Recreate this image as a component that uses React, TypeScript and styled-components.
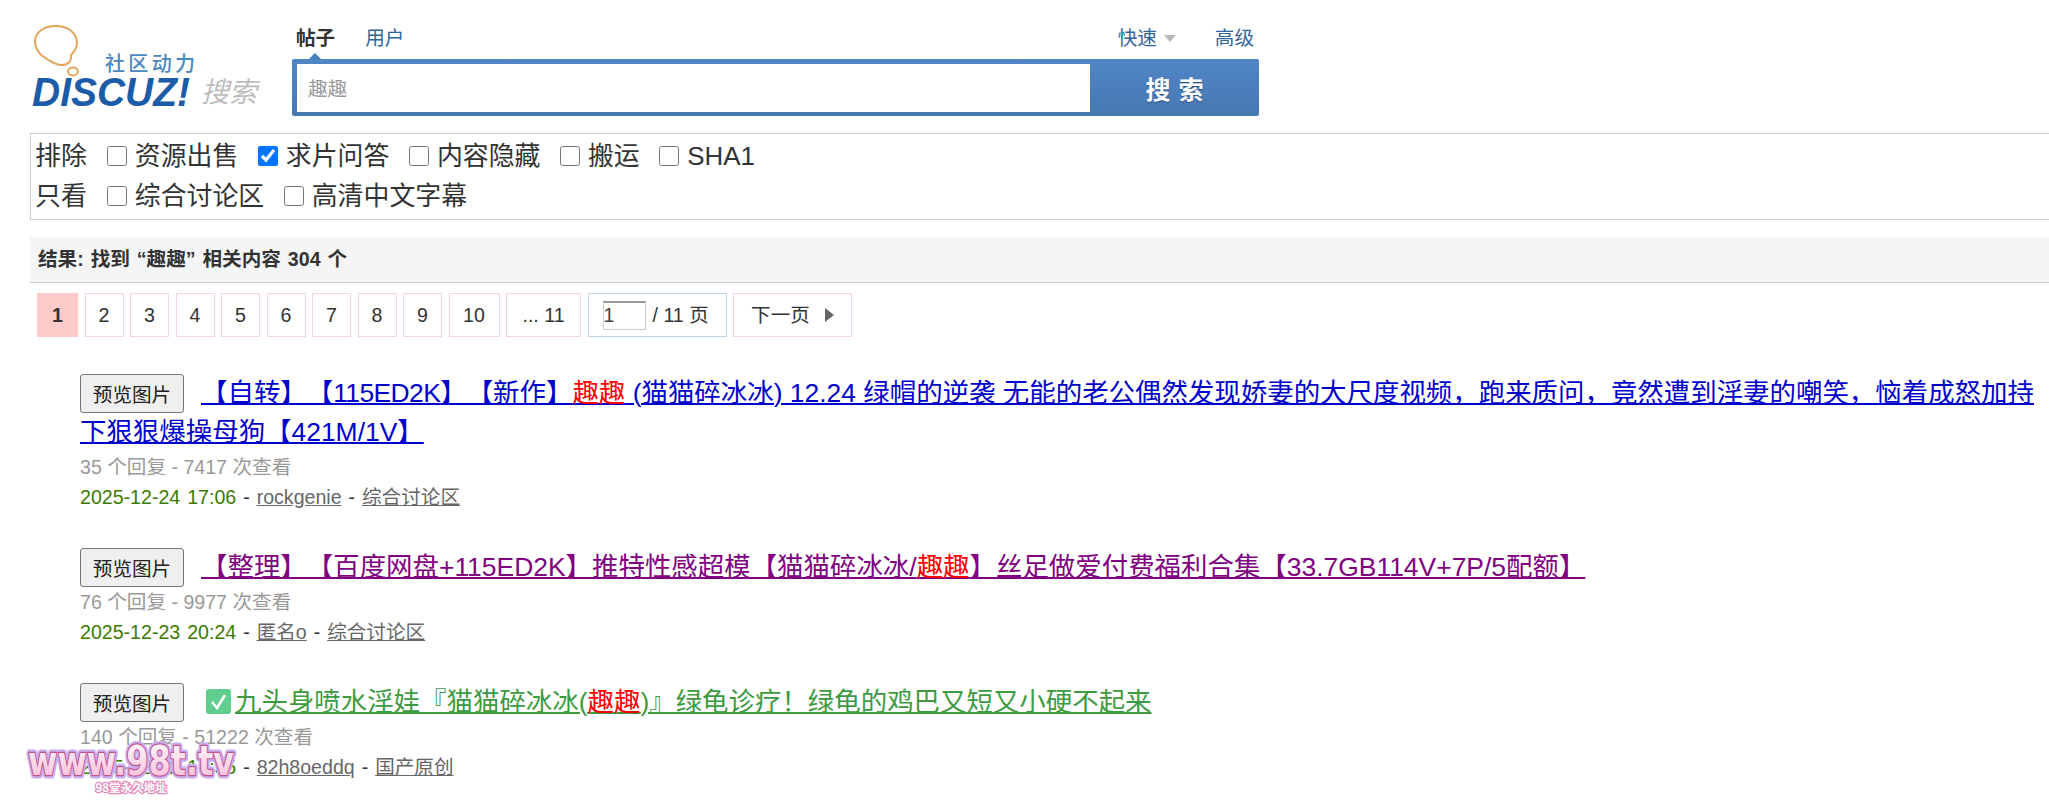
import React from 'react';
import styled, { createGlobalStyle } from 'styled-components';

const FONT = `"Liberation Sans", "Noto Sans CJK SC", sans-serif`;

const GlobalStyle = createGlobalStyle`
  html, body {
    margin: 0;
    padding: 0;
    background: #fff;
    overflow: hidden;
    height: 801px;
  }
  body {
    font: 19.6px/30px ${FONT};
    color: #444;
    text-spacing-trim: space-all;
  }
`;

const Page = styled.div`
  position: relative;
  width: 2049px;
  height: 801px;
  overflow: hidden;
`;

const Header = styled.header`
  display: flex;
  height: 133px;
`;

const LogoArt = styled.svg`
  flex: none;
  width: 292px;
  height: 133px;
`;

const SearchArea = styled.div`
  width: 967px;
  padding-top: 20px;
`;

const TabRow = styled.nav`
  position: relative;
  display: flex;
  align-items: center;
  height: 39px;
  box-sizing: border-box;
  padding: 0 0 3px 4px;
`;

const Tab = styled.a<{ $active?: boolean; $flush?: boolean }>`
  margin-right: ${(p) => (p.$flush ? 0 : 30)}px;
  color: ${(p) => (p.$active ? '#333' : '#369')};
  font-weight: ${(p) => (p.$active ? 700 : 400)};
`;

const TabCaret = styled.span`
  position: absolute;
  left: 17px;
  bottom: 0;
  border: 6px solid transparent;
  border-top: 0;
  border-bottom-color: #4a80bd;
`;

const TabRight = styled.div`
  display: flex;
  align-items: center;
  margin-left: auto;
  margin-right: 5px;
`;

const QuickCaret = styled.span`
  width: 0;
  height: 0;
  margin: 0 39px 0 7px;
  border: 6px solid transparent;
  border-top: 7px solid #bbb;
  border-bottom: 0;
`;

const SearchBox = styled.form`
  display: flex;
  height: 57px;
  box-sizing: border-box;
  border-radius: 2px;
  background: linear-gradient(#4f86c6, #4877b2);
  padding: 5px 0 4px 5px;
`;

const SearchInput = styled.input`
  flex: 1;
  min-width: 0;
  box-sizing: border-box;
  border: 0;
  outline: 0;
  padding: 0 10px 2px 11px;
  background: #fff;
  color: #999;
  font: 19.6px ${FONT};
`;

const SearchButton = styled.button`
  flex: none;
  width: 169px;
  border: 0;
  background: none;
  color: #fff;
  font: 700 25px ${FONT};
  letter-spacing: 8px;
  text-indent: 8px;
  text-shadow: 0 1px 1px #24507f;
  padding: 0;
`;

const FilterBox = styled.div`
  margin: 0 -4px 0 30px;
  height: 87px;
  box-sizing: border-box;
  border: 1px solid #ccc;
  padding: 2px 4px;
  font-size: 25.9px;
  line-height: 40px;
  color: #333;
`;

const FilterRow = styled.div`
  display: flex;
  align-items: center;
  height: 40px;
`;

const FilterTitle = styled.span`
  margin-right: 20px;
`;

const FilterItem = styled.label`
  display: flex;
  align-items: center;
  margin-right: 19.5px;
`;

const FilterCheck = styled.input`
  width: 20px;
  height: 20px;
  margin: 0 8px 0 0;
`;

const ResultBar = styled.div`
  margin: 17px -4px 0 30px;
  height: 46px;
  box-sizing: border-box;
  border-bottom: 1px solid #ccc;
  background: #f5f5f5;
  padding-left: 8px;
  line-height: 45px;
  font-weight: 700;
  color: #333;
  word-spacing: 1.5px;
`;

const Pager = styled.div`
  display: flex;
  gap: 6.5px;
  margin: 10px 0 37px 37px;
  height: 44px;
`;

const PageCell = styled.a<{ $current?: boolean; $width: number }>`
  display: flex;
  align-items: center;
  justify-content: center;
  width: ${(p) => p.$width}px;
  box-sizing: border-box;
  border: 1px solid ${(p) => (p.$current ? '#ffcaca' : '#f5d5d5')};
  background: ${(p) => (p.$current ? '#ffcaca' : '#fff')};
  font-weight: ${(p) => (p.$current ? 700 : 400)};
  color: #333;
`;

const JumpCell = styled.label`
  display: flex;
  align-items: center;
  width: 139px;
  box-sizing: border-box;
  border: 1px solid #c2d5e3;
  padding-left: 14px;
  color: #333;
`;

const JumpInput = styled.input`
  width: 43px;
  height: 29px;
  box-sizing: border-box;
  margin-right: 7px;
  padding: 0;
  border: 1px solid #ccc;
  border-top: 2px solid #999;
  outline: 0;
  color: #444;
  font: 19.6px ${FONT};
`;

const NextArrow = styled.span`
  margin-left: 15px;
  border: 7px solid transparent;
  border-left: 9px solid #666;
  border-right: 0;
`;

const ResultList = styled.ul`
  list-style: none;
  margin: 0;
  padding: 0 0 0 80px;
`;

const ResultItem = styled.li`
  margin-bottom: 35.5px;
`;

const Title = styled.h3`
  margin: 0;
  font-size: 26.45px;
  font-weight: 400;
  line-height: 39.2px;
`;

const PreviewButton = styled.button`
  height: 39px;
  width: 104px;
  box-sizing: border-box;
  margin-right: 17px;
  padding: 0;
  vertical-align: top;
  border: 1px solid #767676;
  border-radius: 3px;
  background: #efefef;
  color: #222;
  font: 19.6px ${FONT};
`;

const TitleLink = styled.a<{ $color: string }>`
  color: ${(p) => p.$color};
  text-decoration: underline;
  text-decoration-thickness: 2px;
`;

const Hit = styled.span`
  color: #f00;
`;

const Narrow = styled.span`
  letter-spacing: -0.6px;
`;

const CheckMark = styled.svg`
  width: 25px;
  height: 25px;
  vertical-align: -3px;
  margin: 0 4px 0 5px;
`;

const Meta = styled.p`
  margin: 0;
  color: #999;
`;

const InfoLine = styled.p`
  margin: 0;
  color: #333;
  word-spacing: 1.5px;
`;

const DateText = styled.span`
  color: #3d7a00;
`;

const InfoLink = styled.a`
  color: #666;
  text-decoration: underline;
`;

const Watermark = styled.svg`
  position: absolute;
  left: 15px;
  top: 728px;
  width: 232px;
  height: 72px;
`;

const PAGES = ['2', '3', '4', '5', '6', '7', '8', '9'];

const Logo = () => (
  <LogoArt viewBox="0 0 292 133">
    <path
      d="M47 59C39 55 35 48 35 42C35 32 44 26 56 26C68 26 77 33 77 43C77 49 73 53 71 55C72 61 68 65 62 65C55 65 52 62 47 59Z"
      fill="#fff"
      stroke="#e5a45a"
      strokeWidth="2"
    />
    <ellipse cx="73" cy="71.5" rx="5" ry="4" fill="#fff" stroke="#e5a45a" strokeWidth="2" />
    <text x="105" y="71" fontFamily='"Noto Sans CJK SC"' fontWeight="500" fontSize="20" fill="#4a86c0" textLength="90">
      社区动力
    </text>
    <text
      x="32"
      y="106"
      fontFamily='"Liberation Sans"'
      fontStyle="italic"
      fontWeight="700"
      fontSize="40"
      fill="#1c5ba8"
      textLength="158"
      lengthAdjust="spacingAndGlyphs"
    >
      DISCUZ!
    </text>
    <text x="201" y="102" fontFamily='"Noto Sans CJK SC"' fontStyle="italic" fontSize="28" fill="#bdbdbd">
      搜索
    </text>
  </LogoArt>
);

const App = () => (
  <Page>
    <GlobalStyle />
    <Header>
      <Logo />
      <SearchArea>
        <TabRow>
          <Tab $active>帖子</Tab>
          <Tab>用户</Tab>
          <TabCaret />
          <TabRight>
            <Tab $flush>快速</Tab>
            <QuickCaret />
            <Tab $flush>高级</Tab>
          </TabRight>
        </TabRow>
        <SearchBox>
          <SearchInput defaultValue="趣趣" />
          <SearchButton type="button">搜索</SearchButton>
        </SearchBox>
      </SearchArea>
    </Header>

    <FilterBox>
      <FilterRow>
        <FilterTitle>排除</FilterTitle>
        <FilterItem><FilterCheck type="checkbox" />资源出售</FilterItem>
        <FilterItem><FilterCheck type="checkbox" defaultChecked />求片问答</FilterItem>
        <FilterItem><FilterCheck type="checkbox" />内容隐藏</FilterItem>
        <FilterItem><FilterCheck type="checkbox" />搬运</FilterItem>
        <FilterItem><FilterCheck type="checkbox" />SHA1</FilterItem>
      </FilterRow>
      <FilterRow>
        <FilterTitle>只看</FilterTitle>
        <FilterItem><FilterCheck type="checkbox" />综合讨论区</FilterItem>
        <FilterItem><FilterCheck type="checkbox" />高清中文字幕</FilterItem>
      </FilterRow>
    </FilterBox>

    <ResultBar>结果: 找到 “趣趣” 相关内容 304 个</ResultBar>

    <Pager>
      <PageCell $current $width={41}>1</PageCell>
      {PAGES.map((n) => (
        <PageCell key={n} $width={39}>{n}</PageCell>
      ))}
      <PageCell $width={51}>10</PageCell>
      <PageCell $width={75}>... 11</PageCell>
      <JumpCell>
        <JumpInput defaultValue="1" />/ 11 页
      </JumpCell>
      <PageCell $width={119}>下一页<NextArrow /></PageCell>
    </Pager>

    <ResultList>
      <ResultItem>
        <Title>
          <PreviewButton type="button">预览图片</PreviewButton>
          <TitleLink $color="#0000cc">
            【自转】【<Narrow>115ED2K</Narrow>】【新作】<Hit>趣趣</Hit> (猫猫碎冰冰) 12.24 绿帽的逆袭 无能的老公偶然发现娇妻的大尺度视频，跑来质问，竟然遭到淫妻的嘲笑，恼着成怒加持下狠狠爆操母狗【421M/1V】
          </TitleLink>
        </Title>
        <Meta>35 个回复 - 7417 次查看</Meta>
        <InfoLine>
          <DateText>2025-12-24 17:06</DateText> - <InfoLink>rockgenie</InfoLink> - <InfoLink>综合讨论区</InfoLink>
        </InfoLine>
      </ResultItem>
      <ResultItem>
        <Title>
          <PreviewButton type="button">预览图片</PreviewButton>
          <TitleLink $color="#800080">
            【整理】【百度网盘+115ED2K】推特性感超模【猫猫碎冰冰/<Hit>趣趣</Hit>】丝足做爱付费福利合集【33.7GB114V+7P/5配额】
          </TitleLink>
        </Title>
        <Meta>76 个回复 - 9977 次查看</Meta>
        <InfoLine>
          <DateText>2025-12-23 20:24</DateText> - <InfoLink>匿名o</InfoLink> - <InfoLink>综合讨论区</InfoLink>
        </InfoLine>
      </ResultItem>
      <ResultItem>
        <Title>
          <PreviewButton type="button">预览图片</PreviewButton>
          <TitleLink $color="#3d9a40">
            <CheckMark viewBox="0 0 25 25">
              <rect width="25" height="25" rx="3" fill="#5fce8e" />
              <path d="M6 13l5 6L19 6" fill="none" stroke="#fff" strokeWidth="2.6" />
            </CheckMark>
            九头身喷水淫娃『猫猫碎冰冰(<Hit>趣趣</Hit>)』绿龟诊疗！绿龟的鸡巴又短又小硬不起来
          </TitleLink>
        </Title>
        <Meta>140 个回复 - 51222 次查看</Meta>
        <InfoLine>
          <DateText>2025-12-22 19:35</DateText> - <InfoLink>82h8oeddq</InfoLink> - <InfoLink>国产原创</InfoLink>
        </InfoLine>
      </ResultItem>
    </ResultList>

    <Watermark viewBox="0 0 232 72">
      <defs>
        <linearGradient id="wmFill" x1="0" y1="0" x2="0" y2="1">
          <stop offset="0" stopColor="#ffffff" />
          <stop offset="1" stopColor="#f9b6d4" />
        </linearGradient>
      </defs>
      <g fontFamily='"DejaVu Sans"' fontWeight="700" fontSize="41" textAnchor="middle">
        <text x="116" y="47" textLength="206" lengthAdjust="spacingAndGlyphs" fill="#cdb4ee" stroke="#c9aff0" strokeWidth="7" strokeLinejoin="round">
          www.98t.tv
        </text>
        <text x="116" y="47" textLength="206" lengthAdjust="spacingAndGlyphs" fill="url(#wmFill)" stroke="#c2528c" strokeWidth="2.4" strokeLinejoin="round" paintOrder="stroke">
          www.98t.tv
        </text>
      </g>
      <text x="116" y="64" textAnchor="middle" fontFamily='"Noto Sans CJK SC"' fontSize="11.5" fontWeight="700" fill="#fff" stroke="#e48cb8" strokeWidth="2.4" paintOrder="stroke">
        98堂永久地址
      </text>
    </Watermark>
  </Page>
);

export default App;
